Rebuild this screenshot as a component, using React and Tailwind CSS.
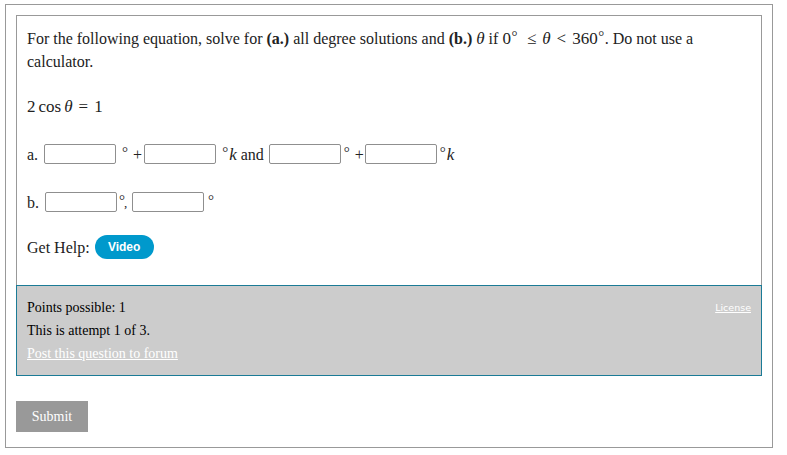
import React from 'react';

const serif = { fontFamily: '"Liberation Serif", "Times New Roman", serif' };

function Box({ className = '' }) {
  return <input type="text" className={`w-[72px] h-[20px] border border-[#8f8f8f] rounded-[2px] bg-white outline-none ${className}`} />;
}

function Deg({ className = '' }) {
  return (
    <span className={`inline-block self-start w-[6px] text-center text-[15px] leading-[15px] mt-[1px] ${className}`}>
      °
    </span>
  );
}

function SupDeg() {
  return <span className="inline-block align-top w-[7px] text-center text-[15px] leading-[18px]">°</span>;
}

export default function App() {
  return (
    <div className="w-[787px] h-[455px] bg-white text-[#222]" style={serif}>
      <div className="ml-[5px] mt-[4px] w-[768px] h-[444px] border border-[#999] px-[10px] pt-[10px]">
        {/* question body */}
        <div className="border border-b-0 border-[#999] h-[270px] px-[10px] pt-[11px] text-[16px] leading-[23px]">
          <p>
            <span>For the following equation, solve for </span>
            <b>(a.)</b>
            <span> all degree solutions and </span>
            <b>(b.)</b>{' '}
            <i className="text-[17px] leading-[23px]">θ</i>
            <span> if </span>
            <span className="text-[17px] leading-[23px]">0</span>
            <SupDeg />
            <span className="ml-[9px] mr-[6px] text-[17px] leading-[23px]">≤</span>
            <i className="text-[17px] leading-[23px]">θ</i>
            <span className="mx-[6px] text-[17px] leading-[23px]">&lt;</span>
            <span className="text-[17px] leading-[23px]">360</span>
            <SupDeg />
            <span>. Do not use a</span>
            <br />
            <span>calculator.</span>
          </p>
          <p className="mt-[22px] text-[17px]">
            <span>2</span>
            <span className="ml-[3px]">cos</span>
            <i className="ml-[3px]">θ</i>
            <span className="mx-[6px]">=</span>
            <span>1</span>
          </p>

          <div className="mt-[26px] flex items-center h-[20px]">
            <span>a.</span>
            <Box className="ml-[6px]" />
            <Deg className="ml-[6px]" />
            <span className="ml-[5px]">+</span>
            <Box className="ml-[2px]" />
            <Deg className="ml-[6px]" />
            <i className="ml-[1px] text-[17px]">k</i>
            <span className="ml-[4px]">and</span>
            <Box className="ml-[5px]" />
            <Deg className="ml-[3px]" />
            <span className="ml-[5px]">+</span>
            <Box className="ml-[1px]" />
            <Deg className="ml-[3px]" />
            <i className="ml-[1px] text-[17px]">k</i>
          </div>

          <div className="mt-[28px] flex items-center h-[20px]">
            <span>b.</span>
            <Box className="ml-[6px]" />
            <Deg className="ml-[2px]" />
            <span className="self-end -ml-[1px] w-[8px] text-[13px] leading-[13px] mb-[3px]">,</span>
            <Box className="ml-[0px]" />
            <Deg className="ml-[4px]" />
          </div>

          <div className="mt-[23px] flex items-center h-[24px]">
            <span>Get Help:</span>
            <button
              className="ml-[5px] w-[59px] h-[24px] rounded-full bg-[#0099cc] text-white text-[12px] font-bold"
              style={{ fontFamily: '"Liberation Sans", Arial, sans-serif' }}
            >
              Video
            </button>
          </div>
        </div>

        {/* info panel */}
        <div className="border border-[#1b7b96] bg-[#cccccc] h-[91px] px-[10px] pt-[10px] text-[14px] leading-[23px] text-black flex justify-between">
          <div>
            <p>Points possible: 1</p>
            <p>This is attempt 1 of 3.</p>
            <a href="#" className="text-white underline">Post this question to forum</a>
          </div>
          <a
            href="#"
            className="text-white underline text-[9.5px] leading-[23px] h-[23px]"
            style={{ fontFamily: '"DejaVu Sans", Tahoma, sans-serif' }}
          >
            License
          </a>
        </div>

        <button className="mt-[25px] w-[72px] h-[31px] bg-[#999] text-white text-[14px]" style={serif}>
          Submit
        </button>
      </div>
    </div>
  );
}
